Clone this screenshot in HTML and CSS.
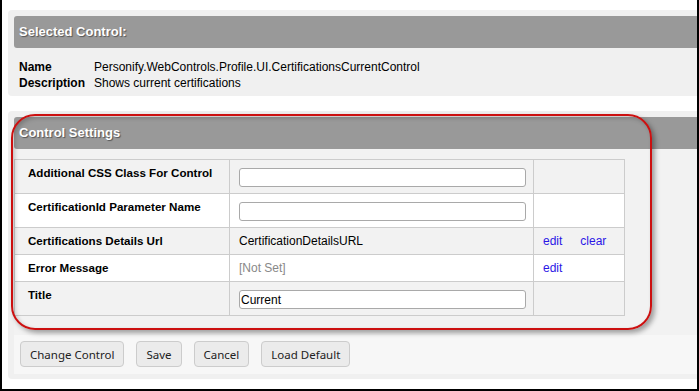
FILE: index.html
```html
<!DOCTYPE html>
<html lang="en">
<head>
    <meta charset="UTF-8">
    <meta name="viewport" content="width=device-width, initial-scale=1.0">
    <title>Control Settings</title>
    <link rel="stylesheet" href="styles.css">
</head>
<body>
    <div class="frame">
        <div class="panel selected">
            <div class="panel-header">Selected Control:</div>
            <table class="info">
                <tr>
                    <td class="info-label">Name</td>
                    <td>Personify.WebControls.Profile.UI.CertificationsCurrentControl</td>
                </tr>
                <tr>
                    <td class="info-label">Description</td>
                    <td>Shows current certifications</td>
                </tr>
            </table>
        </div>

        <div class="panel settings">
            <div class="panel-header">Control Settings</div>
            <div class="settings-body">
                <table class="settings-table">
                    <colgroup>
                        <col class="col-label">
                        <col class="col-value">
                        <col class="col-actions">
                    </colgroup>
                    <tr class="odd">
                        <td class="label">Additional CSS Class For Control</td>
                        <td class="value"><input type="text" class="field"></td>
                        <td class="actions"></td>
                    </tr>
                    <tr>
                        <td class="label">CertificationId Parameter Name</td>
                        <td class="value"><input type="text" class="field"></td>
                        <td class="actions"></td>
                    </tr>
                    <tr class="odd">
                        <td class="label">Certifications Details Url</td>
                        <td class="value">CertificationDetailsURL</td>
                        <td class="actions"><a href="#">edit</a><a href="#">clear</a></td>
                    </tr>
                    <tr>
                        <td class="label">Error Message</td>
                        <td class="value not-set">[Not Set]</td>
                        <td class="actions"><a href="#">edit</a></td>
                    </tr>
                    <tr class="odd">
                        <td class="label">Title</td>
                        <td class="value"><input type="text" class="field" value="Current"></td>
                        <td class="actions"></td>
                    </tr>
                </table>
            </div>
            <div class="button-bar">
                <button class="btn">Change Control</button>
                <button class="btn">Save</button>
                <button class="btn">Cancel</button>
                <button class="btn">Load Default</button>
            </div>
            <!-- red callout drawn over the settings block -->
            <div class="highlight"></div>
        </div>
    </div>
</body>
</html>
```

FILE: styles.css
```css
* {
    margin: 0;
    padding: 0;
    box-sizing: border-box;
}

body {
    font-family: "Liberation Sans", Arial, sans-serif;
    font-size: 12px;
    color: #000000;
    background-color: #ffffff;
    width: 699px;
    height: 391px;
    overflow: hidden;
}

.frame {
    width: 699px;
    height: 391px;
    border: 2px solid #000000;
    border-top: none;
    overflow: hidden;
    padding-top: 10px;
    padding-left: 6px;
}

.panel {
    background-color: #f0f0f0;
    border-radius: 4px;
    margin-right: -30px;
    padding: 6px 0 0 6px;
}

.panel-header {
    background-color: #999999;
    color: #ffffff;
    font-weight: bold;
    font-size: 13px;
    height: 32px;
    line-height: 32px;
    padding-left: 5px;
    border-radius: 3px 0 0 3px;
    text-shadow: 1px 1px 1px rgba(0, 0, 0, 0.45);
}

.selected {
    height: 86px;
}

.info {
    border-collapse: collapse;
    margin-top: 11px;
    margin-left: 5px;
}

.info td {
    line-height: 16px;
    padding: 0;
    white-space: nowrap;
}

.info-label {
    font-weight: bold;
    width: 75px;
}

.settings {
    position: relative;
    margin-top: 15px;
    padding-bottom: 5px;
}

.settings-body {
    background-color: #f2f2f2;
    padding: 10px 0 19px 0;
}

.settings-table {
    border-collapse: collapse;
    table-layout: fixed;
    width: 610px;
}

.col-label {
    width: 215px;
}

.col-value {
    width: 304px;
}

.col-actions {
    width: 91px;
}

.settings-table td {
    border: 1px solid #cccccc;
    vertical-align: top;
    line-height: 14px;
    height: 27px;
    padding: 6px 9px;
    white-space: nowrap;
    background-color: #ffffff;
}

.settings-table tr.odd td {
    background-color: #f2f2f2;
}

.settings-table td.label {
    font-weight: bold;
    font-size: 11.6px;
    padding-left: 13px;
}

.not-set {
    color: #888888;
}

.actions a {
    color: #2b16e6;
    text-decoration: none;
    margin-right: 18px;
}

.field {
    display: block;
    width: 287px;
    height: 19px;
    margin-top: 2px;
    border: 1px solid #a9a9a9;
    border-radius: 3px;
    background-color: #ffffff;
    font-family: "Liberation Sans", Arial, sans-serif;
    font-size: 12px;
    padding: 0 1px;
}

.button-bar {
    background-color: #f7f7f7;
    padding: 6px 6px 7px 6px;
    display: flex;
    gap: 12px;
}

.btn {
    font-family: "Noto Sans", "Open Sans", sans-serif;
    font-size: 11.5px;
    color: #222222;
    background-color: #ebebeb;
    border: 1px solid #cccccc;
    border-radius: 4px;
    height: 26px;
    padding: 0 9px;
    cursor: pointer;
}

.highlight {
    position: absolute;
    left: 3px;
    top: 3px;
    width: 641px;
    height: 216px;
    border: 2px solid #cc1010;
    border-radius: 24px;
    box-shadow: 3px 3px 5px rgba(0, 0, 0, 0.35), inset 2px 2px 4px rgba(0, 0, 0, 0.2);
    pointer-events: none;
}
```
